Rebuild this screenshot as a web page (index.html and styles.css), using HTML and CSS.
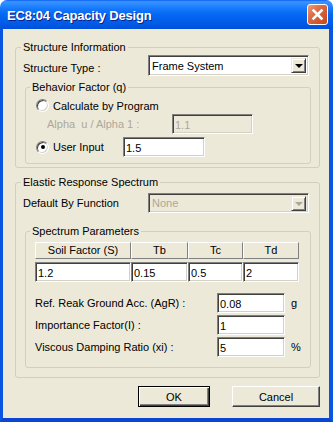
FILE: index.html
```html
<!DOCTYPE html>
<html lang="en">
<head>
    <meta charset="UTF-8">
    <title>EC8:04 Capacity Design</title>
    <link rel="stylesheet" href="styles.css">
</head>
<body>
    <div class="window">
        <div class="titlebar">
            <span class="title">EC8:04 Capacity Design</span>
            <span class="close">
                <svg width="19" height="19" viewBox="0 0 19 19">
                    <path d="M5.5 5.5 L13.5 13.5 M13.5 5.5 L5.5 13.5" stroke="#fff" stroke-width="2.5" stroke-linecap="square"/>
                </svg>
            </span>
        </div>

        <div class="client">
            <fieldset class="group outer first-group">
                <legend>Structure Information</legend>
                <div class="type-row">
                    <label class="type-label">Structure Type :</label>
                    <div class="combo">
                        <span class="combo-text">Frame System</span>
                        <span class="drop"><span class="arrow"></span></span>
                    </div>
                </div>

                <fieldset class="group inner behavior">
                    <legend>Behavior Factor (q)</legend>
                    <div class="radio-row calc">
                        <span class="radio"></span>
                        <span>Calculate by Program</span>
                    </div>
                    <div class="alpha-row">
                        <span class="alpha-label">Alpha&nbsp; u / Alpha 1 :</span>
                        <input class="field disabled alpha-input" value="1.1" disabled>
                    </div>
                    <div class="radio-row user">
                        <span class="radio checked"></span>
                        <span class="user-label">User Input</span>
                        <input class="field user-input" value="1.5">
                    </div>
                </fieldset>
            </fieldset>

            <fieldset class="group outer second-group">
                <legend>Elastic Response Spectrum</legend>
                <div class="default-row">
                    <label class="type-label">Default By Function</label>
                    <div class="combo off">
                        <span class="combo-text">None</span>
                        <span class="drop"><span class="arrow"></span></span>
                    </div>
                </div>

                <fieldset class="group inner spectrum">
                    <legend>Spectrum Parameters</legend>
                    <div class="param-grid">
                        <div class="head">Soil Factor (S)</div>
                        <div class="head">Tb</div>
                        <div class="head">Tc</div>
                        <div class="head">Td</div>
                        <input class="field cell" value="1.2">
                        <input class="field cell" value="0.15">
                        <input class="field cell" value="0.5">
                        <input class="field cell" value="2">
                    </div>

                    <div class="params">
                        <div class="param-row">
                            <span class="param-label">Ref. Reak Ground Acc. (AgR) :</span>
                            <input class="field param-input" value="0.08">
                            <span class="unit">g</span>
                        </div>
                        <div class="param-row">
                            <span class="param-label">Importance Factor(I) :</span>
                            <input class="field param-input" value="1">
                        </div>
                        <div class="param-row">
                            <span class="param-label">Viscous Damping Ratio (xi) :</span>
                            <input class="field param-input" value="5">
                            <span class="unit">%</span>
                        </div>
                    </div>
                </fieldset>
            </fieldset>

            <div class="buttons">
                <button class="btn ok">OK</button>
                <button class="btn cancel">Cancel</button>
            </div>
        </div>
    </div>
</body>
</html>
```

FILE: styles.css
```css
body {
    margin: 0;
    background: #fff;
    font-family: "Liberation Sans", Arial, sans-serif;
    font-size: 11px;
    color: #000;
}

.window {
    width: 333px;
    height: 422px;
    display: flex;
    flex-direction: column;
}

/* title bar */
.titlebar {
    height: 29px;
    flex: none;
    display: flex;
    align-items: center;
    justify-content: space-between;
    padding: 0 5px 0 7px;
    border-radius: 7px 7px 0 0;
    background: linear-gradient(to bottom, #0a5ff0 0%, #3d95ff 6%, #2a8bff 14%, #1679fb 30%, #0468f4 50%, #0260ea 70%, #0058e4 86%, #0050d8 100%);
}

.title {
    color: #fff;
    font-weight: bold;
    font-size: 13px;
    letter-spacing: -0.2px;
    text-shadow: 1px 1px #0f1f8a;
    padding-top: 1px;
}

.close {
    width: 19px;
    height: 19px;
    border: 1px solid #fff;
    border-radius: 3px;
    background: linear-gradient(135deg, #ee9b78 0%, #dc6a42 40%, #c8461c 100%);
    display: flex;
}

/* client area */
.client {
    flex: 1;
    background: #ece9d8;
    border-left: 3px solid #0a55e2;
    border-right: 4px solid #0a55e2;
    border-bottom: 4px solid #0a46d0;
    padding: 0 9px 0 12px;
}

.group {
    border: 1px solid #d0d0bf;
    border-radius: 3px;
    margin: 0;
    min-width: 0;
}

.group legend {
    padding: 0 2px;
    margin-left: -2px;
    line-height: 13px;
}

.outer {
    width: 305px;
    box-sizing: border-box;
    padding: 1px 7px 3px 7px;
}

.first-group { margin-top: 12px; }
.second-group { margin-top: 8px; padding-top: 4px; padding-bottom: 9px; }

.inner {
    width: 286px;
    box-sizing: border-box;
    margin-left: 2px;
    padding: 4px 6px 6px 6px;
}

.behavior { margin-top: 5px; }
.spectrum { margin-top: 12px; padding-bottom: 10px; }

/* combo boxes */
.type-row,
.default-row {
    display: flex;
}

.type-row .type-label {
    align-self: flex-end;
    padding-bottom: 1px;
    line-height: 13px;
}

.default-row { align-items: center; }

.type-label { width: 125px; }

.combo {
    box-sizing: border-box;
    width: 161px;
    height: 21px;
    display: flex;
    align-items: center;
    background: #fff;
    border: 1px solid;
    border-color: #808080 #fff #fff #808080;
    box-shadow: inset 1px 1px #404040, inset -1px -1px #d4d0c8;
    padding: 2px 2px 2px 3px;
}

.default-row .combo { height: 20px; }

.combo-text { flex: 1; }

.drop {
    width: 15px;
    height: 15px;
    box-sizing: border-box;
    background: #ece9d8;
    border: 1px solid;
    border-color: #ece9d8 #404040 #404040 #ece9d8;
    box-shadow: inset 1px 1px #fff, inset -1px -1px #808080;
    display: flex;
    align-items: center;
    justify-content: center;
}

.arrow {
    width: 0;
    height: 0;
    border-left: 4px solid transparent;
    border-right: 4px solid transparent;
    border-top: 4px solid #000;
    margin-top: 1px;
}

.combo.off {
    background: #ece9d8;
    color: #aca899;
}

.combo.off .arrow { border-top-color: #aca899; }

/* sunken text fields */
.field {
    box-sizing: border-box;
    height: 20px;
    margin: 0;
    padding: 1px 2px 0 2px;
    border: 1px solid;
    border-color: #808080 #fff #fff #808080;
    box-shadow: inset 1px 1px #404040, inset -1px -1px #d4d0c8;
    background: #fff;
    font-family: "Liberation Sans", Arial, sans-serif;
    font-size: 11px;
    color: #000;
    outline: none;
}

.field.disabled {
    background: #ece9d8;
    color: #aca899;
}

/* behavior factor */
.radio-row {
    display: flex;
    align-items: center;
    padding-left: 4px;
}

.calc { height: 15px; }

.radio {
    width: 13px;
    height: 13px;
    box-sizing: border-box;
    border-radius: 50%;
    border: 1px solid;
    border-color: #808080 #fff #fff #808080;
    box-shadow: inset 1px 1px #404040, inset -1px -1px #d4d0c8;
    background: #fff;
    margin-right: 4px;
    display: flex;
    align-items: center;
    justify-content: center;
}

.radio.checked::after {
    content: "";
    width: 4px;
    height: 4px;
    border-radius: 50%;
    background: #000;
}

.alpha-row {
    display: flex;
    align-items: center;
    margin-top: 1px;
    padding-left: 15px;
}

.alpha-label {
    width: 125px;
    color: #aca899;
}

.alpha-input { width: 81px; }

.user { margin-top: 3px; }

.user-label { width: 70px; }

.user-input { width: 82px; }

/* spectrum parameters */
.param-grid {
    display: grid;
    grid-template-columns: 96px 57px 55px 56px;
    grid-template-rows: 17px 20px;
    row-gap: 3px;
    margin-left: 3px;
}

.head {
    box-sizing: border-box;
    border: 1px solid;
    border-color: #fff #808080 #808080 #fff;
    text-align: center;
    line-height: 15px;
}

.cell { width: 100%; }

.params {
    display: flex;
    flex-direction: column;
    gap: 2px;
    margin-top: 11px;
    margin-left: 3px;
}

.param-row {
    display: flex;
    align-items: center;
}

.param-label { width: 182px; }

.param-input { width: 68px; }

.unit { margin-left: 6px; }

/* dialog buttons */
.buttons {
    display: flex;
    justify-content: flex-end;
    gap: 22px;
    margin-top: 8px;
}

.btn {
    height: 21px;
    box-sizing: border-box;
    margin: 0;
    background: #ece9d8;
    border: 1px solid;
    border-color: #fff #404040 #404040 #fff;
    box-shadow: inset -1px -1px #808080;
    font-family: "Liberation Sans", Arial, sans-serif;
    font-size: 11px;
    color: #000;
    padding: 0;
}

.ok {
    width: 72px;
    border-color: #000;
    box-shadow: inset 1px 1px #fff, inset -1px -1px #404040, inset -2px -2px #808080;
}

.cancel { width: 88px; }
```
